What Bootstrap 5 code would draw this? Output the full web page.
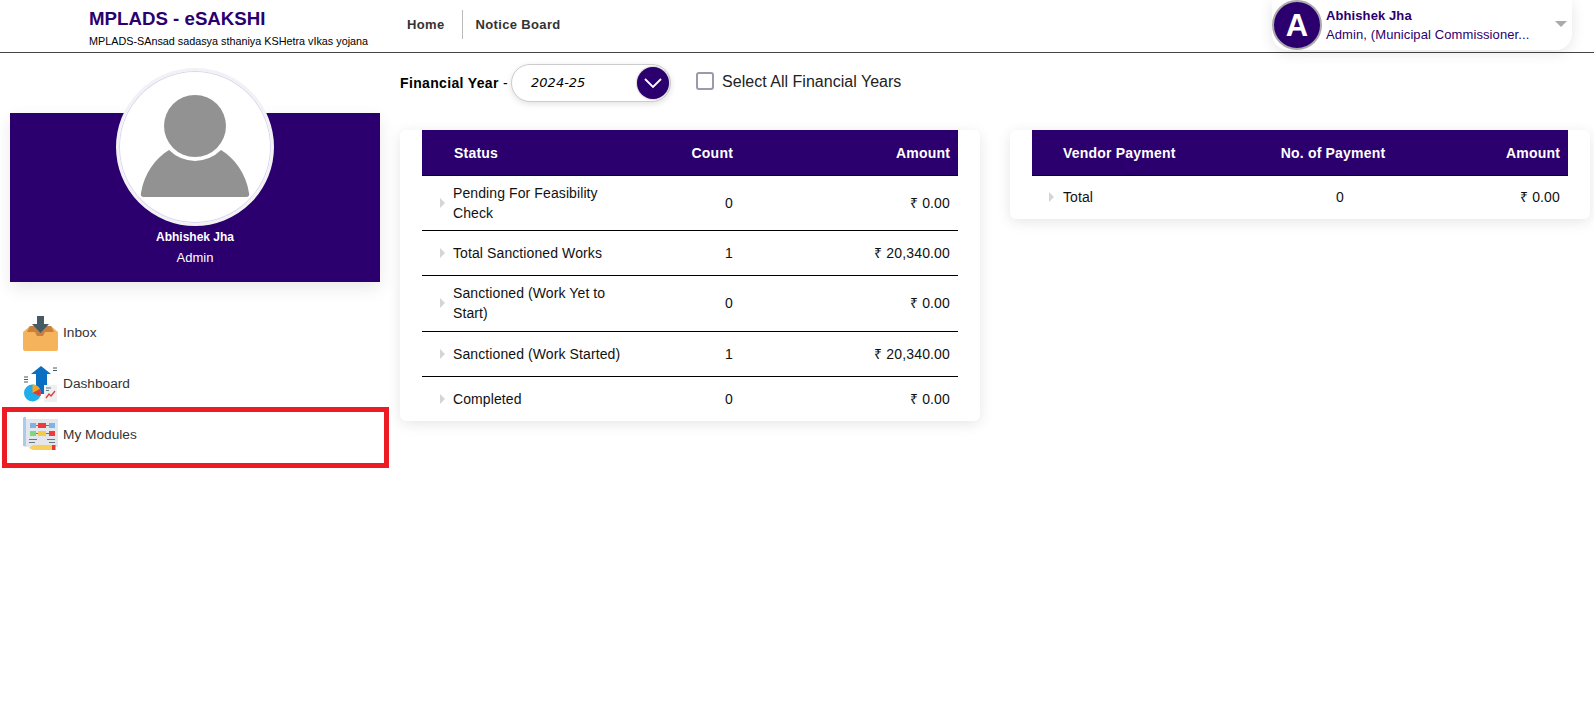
<!DOCTYPE html>
<html lang="en">
<head>
  <meta charset="UTF-8">
  <title>MPLADS - eSAKSHI</title>
  <link href="https://cdn.jsdelivr.net/npm/bootstrap@5.3.3/dist/css/bootstrap.min.css" rel="stylesheet">
  <style>
    body { font-family: "Liberation Sans", Arial, sans-serif; font-size: 14px; color: #000; background: #fff; }
    .top-bar { height: 53px; border-bottom: 1px solid #444; padding-left: 89px; padding-right: 22px; }
    .brand-block { width: 318px; }
    .brand-title { font-size: 18.7px; font-weight: 700; color: #2b006e; line-height: 21px; margin-top: 8px; }
    .brand-sub { font-size: 10.8px; line-height: 12px; margin-top: 6px; color: #000; }
    .top-link { font-size: 13px; font-weight: 700; color: #333; text-decoration: none; letter-spacing: .35px; }
    .top-link-sep { border-right: 1px solid #bbb; height: 29px; padding-right: 17px; margin-right: 13px; line-height: 29px; }
    .user-pill { width: 300px; height: 50px; background: #fff; border-radius: 0 0 16px 16px; box-shadow: 0 3px 14px rgba(0,0,0,.1); }
    .user-avatar { width: 50px; height: 50px; border-radius: 50%; background: #2b006e; border: 2px solid #aaa; color: #fff; font-size: 31px; font-weight: 700; line-height: 1; flex: none; }
    .user-name { font-size: 13px; font-weight: 700; color: #2b006e; line-height: 16px; margin-top: 8px; letter-spacing: .1px; }
    .user-role { font-size: 13px; color: #2b006e; line-height: 16px; margin-top: 3px; letter-spacing: .1px; }
    .user-caret { width: 0; height: 0; border-left: 6px solid transparent; border-right: 6px solid transparent; border-top: 6px solid #aaa; margin-left: auto; margin-right: 5px; margin-top: -3px; }
    .side-col { width: 400px; flex: none; padding-top: 15px; }
    .profile-box { margin: 45px 20px 0 10px; height: 169px; background: #2b006e; color: #fff; box-shadow: 0 6px 16px rgba(0,0,0,.09); }
    .profile-pic { width: 158px; height: 158px; border-radius: 50%; background: #fff; border: 3px solid #f2f2f5; box-shadow: inset 0 0 0 1px #dcd6ee; margin-top: -45px; flex: none; }
    .profile-name { font-size: 12px; font-weight: 700; line-height: 14px; margin-top: 4px; }
    .profile-role { font-size: 13px; line-height: 16px; margin-top: 6px; }
    .menu-list { margin-top: 25px; }
    .menu-row { height: 51px; padding-left: 23px; color: #333; font-size: 13.7px; gap: 5px; }
    .menu-row svg { width: 35px; height: 36px; flex: none; }
    .menu-row span { padding-top: 2px; }
    .menu-flag { height: 61px; margin-top: -2px; margin-left: 2px; width: 387px; padding-left: 16px; padding-bottom: 7px; border: 5px solid #ed1c24; }
    .main-col { padding-top: 11px; }
    .fy-label { font-size: 14px; font-weight: 700; letter-spacing: .35px; }
    .fy-pill { width: 160px; height: 38px; border: 1px solid #ccc; border-radius: 19px; background: #fff; box-shadow: 0 2px 6px rgba(0,0,0,.12); margin-left: 3px; padding-left: 19px; padding-right: 1px; font-family: "DejaVu Sans", sans-serif; font-style: italic; font-size: 13px; }
    .fy-btn { width: 32px; height: 32px; border-radius: 50%; background: #2b006e; flex: none; box-shadow: 0 0 2px rgba(0,0,0,.5); }
    .fy-check { margin-left: 25px; gap: 8px; font-size: 16px; letter-spacing: .02px; color: #222; margin-top: -2px; margin-bottom: 0; }
    .fy-box { width: 18px; height: 18px; border: 2px solid #9a9aa8; border-radius: 3px; background: #fff; margin-top: -3px; }
    .stat-wrap { margin-top: 28px; gap: 30px; }
    .stat-card { background: #fff; border-radius: 6px; box-shadow: 0 3px 14px rgba(0,0,0,.1); }
    .stat-left { width: 580px; padding-left: 22px; padding-right: 22px; }
    .stat-right { width: 580px; padding-left: 22px; padding-right: 22px; }
    .stat-table { table-layout: fixed; margin: 0; font-size: 14px; line-height: 20px; }
    .stat-table th { background: #2b006e; color: #fff; height: 45px; padding: 2px 8px 0; vertical-align: middle; font-size: 14px; letter-spacing: .2px; border-bottom: 1px solid #000; }
    .stat-table td { padding: 7px 8px; height: 45px; vertical-align: middle; border-bottom: 1px solid #000; color: #111; }
    .stat-table td.text-end { letter-spacing: .15px; word-spacing: .3px; }
    .stat-table tr:last-child td { border-bottom: 0; }
    .stat-table th:first-child { padding-left: 32px; }
    .stat-table td:first-child { padding-left: 18px; }
    .stat-table tr.tall-line td { padding-bottom: 8px; }
    .stat-right .stat-table th:first-child { padding-left: 31px; }
    .stat-right .stat-table td:first-child { padding-left: 17px; }
    .stat-right .stat-table td { height: 44px; }
    .stat-right .row-head { gap: 9px; }
    .row-head { gap: 8px; }
    .row-arrow { width: 0; height: 0; border-top: 5px solid transparent; border-bottom: 5px solid transparent; border-left: 5px solid #d5d5d5; flex: none; }
    .row-text { width: 180px; letter-spacing: .1px; }
    .head-nudge { padding-right: 16px !important; }
    .cell-nudge { padding-left: 14px !important; }
  </style>
</head>
<body>
  <header class="top-bar d-flex align-items-start">
    <div class="brand-block">
      <div class="brand-title">MPLADS - eSAKSHI</div>
      <div class="brand-sub">MPLADS-SAnsad sadasya sthaniya KSHetra vIkas yojana</div>
    </div>
    <nav class="d-flex align-items-center" style="margin-top:10px">
      <a href="#" class="top-link top-link-sep">Home</a>
      <a href="#" class="top-link">Notice Board</a>
    </nav>
    <div class="user-pill d-flex align-items-start ms-auto">
      <div class="user-avatar d-flex align-items-center justify-content-center">A</div>
      <div class="ms-1">
        <div class="user-name">Abhishek Jha</div>
        <div class="user-role">Admin, (Municipal Commissioner...</div>
      </div>
      <span class="user-caret align-self-center"></span>
    </div>
  </header>

  <div class="d-flex">
    <aside class="side-col">
      <div class="profile-box d-flex flex-column align-items-center">
        <div class="profile-pic d-flex align-items-center justify-content-center">
          <svg width="152" height="152" viewBox="0 0 152 152">
            <circle cx="76" cy="55" r="31" fill="#929292"/>
            <path d="M50 79a36.500 36.500 0 0 0 52 0c13 8 25 23 28 43q1 4-3 4H25q-4 0-3-4c3-20 15-35 28-43z" fill="#929292"/>
          </svg>
        </div>
        <div class="profile-name">Abhishek Jha</div>
        <div class="profile-role">Admin</div>
      </div>
      <div class="menu-list">
        <div class="menu-row d-flex align-items-center">
          <svg viewBox="0 0 35 36">
            <path d="M0 17l7-6h21l7 6v17q0 2-2 2H2q-2 0-2-2z" fill="#f5b45c"/>
            <path d="M7 11h21l3 6H22l-2 4h-6l-2-4H4z" fill="#c97f3e"/>
            <path d="M14 1h7v8h5l-8.500 9L9 9h5z" fill="#455a64"/>
          </svg>
          <span>Inbox</span>
        </div>
        <div class="menu-row d-flex align-items-center">
          <svg viewBox="0 0 35 36">
            <path d="M18 0l10 8h-4v20h-11V8H8z" fill="#0a6fc0"/>
            <circle cx="9.500" cy="27" r="8.500" fill="#1eaeea"/>
            <path d="M9.500 27V18.500a8.500 8.500 0 0 1 7.500 4.500z" fill="#f5a623"/>
            <path d="M9.500 27l7.500-4a8.500 8.500 0 0 1 .5 7z" fill="#e53935"/>
            <rect x="21" y="19" width="13" height="17" fill="#eef0f2"/>
            <path d="M23 22h5M23 24.500h3" stroke="#607d8b" fill="none"/>
            <path d="M23 32l3-4 2 2 4-5" stroke="#e53935" stroke-width="1.300" fill="none"/>
            <path d="M30 2h4M30 4.500h4M1 11h4M1 13.500h4M1 16h4" stroke="#455a64" fill="none"/>
          </svg>
          <span>Dashboard</span>
        </div>
        <div class="menu-row menu-flag d-flex align-items-center">
          <svg viewBox="0 0 35 36">
            <rect x="1" y="3" width="34" height="28" fill="#e3e6ea"/>
            <path d="M0 2q1-2 3-1v29H0z" fill="#a9cce8"/>
            <rect x="7" y="7" width="6" height="5" fill="#7fb2e5"/>
            <rect x="15" y="7" width="8" height="5" fill="#ec3b3b"/>
            <rect x="26" y="7" width="6" height="5" fill="#7fb2e5"/>
            <rect x="7" y="15" width="6" height="5" fill="#7fd67f"/>
            <rect x="15" y="15" width="8" height="5" fill="#f7c948"/>
            <rect x="26" y="15" width="6" height="5" fill="#ec3b3b"/>
            <path d="M13 9.500h2M23 9.500h3M13 17.500h2M23 17.500h3M6 23.500h8M24 23.500h8M6 26.500h6M26 26.500h6" stroke="#6b7780" fill="none"/>
            <path d="M6 32l4-3h20v5H10z" fill="#f7cf5a"/>
            <rect x="29" y="29" width="3.500" height="5" fill="#e53935"/>
          </svg>
          <span>My Modules</span>
        </div>
      </div>
    </aside>

    <main class="main-col flex-grow-1">
      <div class="d-flex align-items-center">
        <span class="fy-label">Financial Year <span class="fw-normal">-</span></span>
        <div class="fy-pill d-flex align-items-center justify-content-between">
          <span>2024-25</span>
          <span class="fy-btn d-flex align-items-center justify-content-center">
            <svg width="20" height="12" viewBox="0 0 20 12"><path d="M2 2l8 8 8-8" fill="none" stroke="#fff" stroke-width="1.800"/></svg>
          </span>
        </div>
        <label class="fy-check d-flex align-items-center">
          <span class="fy-box"></span>
          Select All Financial Years
        </label>
      </div>

      <div class="stat-wrap d-flex align-items-start">
        <div class="stat-card stat-left">
          <table class="table stat-table">
            <colgroup><col style="width:219px"><col style="width:100px"><col></colgroup>
            <thead>
              <tr><th>Status</th><th class="text-end">Count</th><th class="text-end">Amount</th></tr>
            </thead>
            <tbody>
              <tr>
                <td><div class="row-head d-flex align-items-center"><span class="row-arrow"></span><span class="row-text">Pending For Feasibility Check</span></div></td>
                <td class="text-end">0</td><td class="text-end">₹ 0.00</td>
              </tr>
              <tr>
                <td><div class="row-head d-flex align-items-center"><span class="row-arrow"></span><span class="row-text">Total Sanctioned Works</span></div></td>
                <td class="text-end">1</td><td class="text-end">₹ 20,340.00</td>
              </tr>
              <tr class="tall-line">
                <td><div class="row-head d-flex align-items-center"><span class="row-arrow"></span><span class="row-text">Sanctioned (Work Yet to Start)</span></div></td>
                <td class="text-end">0</td><td class="text-end">₹ 0.00</td>
              </tr>
              <tr>
                <td><div class="row-head d-flex align-items-center"><span class="row-arrow"></span><span class="row-text">Sanctioned (Work Started)</span></div></td>
                <td class="text-end">1</td><td class="text-end">₹ 20,340.00</td>
              </tr>
              <tr>
                <td><div class="row-head d-flex align-items-center"><span class="row-arrow"></span><span class="row-text">Completed</span></div></td>
                <td class="text-end">0</td><td class="text-end">₹ 0.00</td>
              </tr>
            </tbody>
          </table>
        </div>

        <div class="stat-card stat-right">
          <table class="table stat-table">
            <colgroup><col style="width:220px"><col style="width:170px"><col></colgroup>
            <thead>
              <tr><th>Vendor Payment</th><th class="text-center head-nudge">No. of Payment</th><th class="text-end">Amount</th></tr>
            </thead>
            <tbody>
              <tr>
                <td><div class="row-head d-flex align-items-center"><span class="row-arrow"></span><span class="row-text">Total</span></div></td>
                <td class="text-center cell-nudge">0</td><td class="text-end">₹ 0.00</td>
              </tr>
            </tbody>
          </table>
        </div>
      </div>
    </main>
  </div>
  <script src="https://cdn.jsdelivr.net/npm/bootstrap@5.3.3/dist/js/bootstrap.bundle.min.js"></script>
</body>
</html>
